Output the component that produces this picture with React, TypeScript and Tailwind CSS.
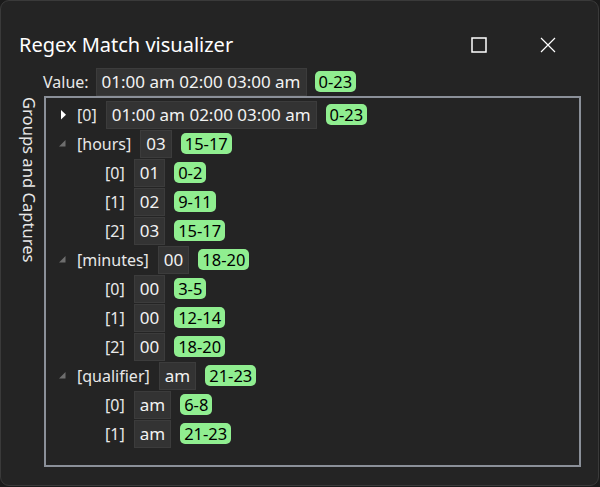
import React from 'react';

type Node = {
  label: string;
  value: string;
  range: string;
  children?: Node[];
  collapsed?: boolean;
};

const tree: Node[] = [
  { label: '[0]', value: '01:00 am 02:00 03:00 am', range: '0-23', collapsed: true },
  {
    label: '[hours]', value: '03', range: '15-17',
    children: [
      { label: '[0]', value: '01', range: '0-2' },
      { label: '[1]', value: '02', range: '9-11' },
      { label: '[2]', value: '03', range: '15-17' },
    ],
  },
  {
    label: '[minutes]', value: '00', range: '18-20',
    children: [
      { label: '[0]', value: '00', range: '3-5' },
      { label: '[1]', value: '00', range: '12-14' },
      { label: '[2]', value: '00', range: '18-20' },
    ],
  },
  {
    label: '[qualifier]', value: 'am', range: '21-23',
    children: [
      { label: '[0]', value: 'am', range: '6-8' },
      { label: '[1]', value: 'am', range: '21-23' },
    ],
  },
];

const Badge = ({ text }: { text: string }) => (
  <span className="h-[21px] px-[4px] rounded-[5px] bg-[#90ee90] text-black text-[16.5px] leading-[21px]">{text}</span>
);

const ValueBox = ({ text }: { text: string }) => (
  <span className="h-[28px] px-[5px] bg-[#333333] border border-[#3c3c3c] text-[#f2f2f2] text-[17px] leading-[26px]">{text}</span>
);

const Toggle = ({ node }: { node: Node }) => {
  if (node.collapsed) {
    return (
      <svg width="16" height="16" viewBox="0 0 16 16" className="shrink-0">
        <path d="M3 3 L8 7.8 L3 12.6 Z" fill="#ffffff" />
      </svg>
    );
  }
  if (node.children) {
    return (
      <svg width="16" height="16" viewBox="0 0 16 16" className="shrink-0">
        <path d="M1 10.5 L7.5 4 L7.5 10.5 Z" fill="#6e6e6e" />
      </svg>
    );
  }
  return <span className="w-[16px] shrink-0" />;
};

const Row = ({ node, depth }: { node: Node; depth: number }) => (
  <>
    <div className="h-[29px] flex items-center" style={{ paddingLeft: 12 + depth * 28 }}>
      {depth === 0 ? <Toggle node={node} /> : null}
      <span className={depth === 0 ? 'ml-[3px] mr-[9px]' : 'ml-[19px] mr-[9px]'}>{node.label}</span>
      <ValueBox text={node.value} />
      <span className="w-[9px]" />
      <Badge text={node.range} />
    </div>
    {node.children?.map((c, i) => <Row key={i} node={c} depth={depth + 1} />)}
  </>
);

export default function App() {
  return (
    <div
      className="w-[600px] h-[487px] bg-[#1b1b1b] text-[16px] text-[#e8e8e8]"
      style={{ fontFamily: '"Segoe UI", "Noto Sans", "Open Sans", sans-serif' }}
    >
      <div className="h-[486px] w-[599px] rounded-[9px] border border-[#3a3a3a] bg-[#242424] flex flex-col">
        <div className="h-[64px] flex items-center pl-[18px] pt-[24px]">
          <span className="text-[20px] text-white flex-1">Regex Match visualizer</span>
          <svg width="16" height="16" viewBox="0 0 16 16" className="mr-[53px]">
            <rect x="1" y="1" width="14" height="14" fill="none" stroke="#ffffff" strokeWidth="1.5" />
          </svg>
          <svg width="16" height="16" viewBox="0 0 16 16" className="mr-[42px]">
            <path d="M1 1 L15 15 M15 1 L1 15" stroke="#ffffff" strokeWidth="1.2" />
          </svg>
        </div>
        <div className="flex items-center pl-[42px] h-[29px] mt-[2px]">
          <span className="mr-[7px]">Value:</span>
          <ValueBox text="01:00 am 02:00 03:00 am" />
          <span className="w-[8px]" />
          <Badge text="0-23" />
        </div>
        <div className="flex flex-1 mb-[18px] mr-[17px]">
          <div className="w-[43px] flex pl-[19px]">
            <span className="[writing-mode:vertical-rl] text-[16.6px] leading-[18px] pt-[1px]">Groups and Captures</span>
          </div>
          <div className="flex-1 border-2 border-[#8b9099] pt-[2px]">
            {tree.map((n, i) => <Row key={i} node={n} depth={0} />)}
          </div>
        </div>
      </div>
    </div>
  );
}
